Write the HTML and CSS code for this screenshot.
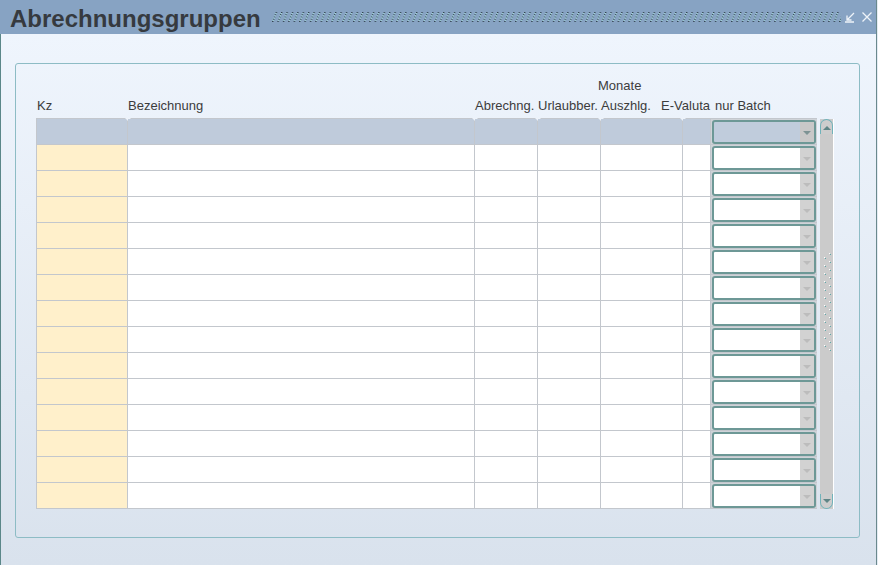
FILE: index.html
```html
<!DOCTYPE html>
<html lang="de">
<head>
<meta charset="utf-8">
<title>Abrechnungsgruppen</title>
<link rel="stylesheet" href="styles.css">
</head>
<body>
<div class="window">
  <div class="titlebar">
    <h1 class="title">Abrechnungsgruppen</h1>
    <svg class="hatch" height="10" preserveAspectRatio="none">
      <defs>
        <pattern id="hp" patternUnits="userSpaceOnUse" width="5.4" height="10">
          <line x1="0.5" y1="10" x2="4.5" y2="0" stroke="#1e2a34" stroke-width="1.2" stroke-dasharray="1.2 1.2"/>
          <line x1="0.5" y1="10" x2="4.5" y2="0" stroke="#a6dcdc" stroke-width="1.2" stroke-dasharray="1.2 1.2" stroke-dashoffset="1.2"/>
        </pattern>
      </defs>
      <rect width="100%" height="10" fill="url(#hp)"/>
    </svg>
    <div class="ctrls">
      <svg class="ico" width="10" height="11" viewBox="0 0 10 11">
        <path d="M9 1 L2.5 7.5 M2 3.5 V8 H6.5 M0 10 H9" fill="none" stroke="#eef3f9" stroke-width="1.3"/>
      </svg>
      <svg class="ico close" width="10" height="10" viewBox="0 0 10 10">
        <path d="M0.5 0.5 L9.5 9.5 M9.5 0.5 L0.5 9.5" fill="none" stroke="#eef3f9" stroke-width="1.3"/>
      </svg>
    </div>
  </div>
  <div class="body">
    <div class="panel">
      <div class="heads">
        <div class="h monate">Monate</div>
        <div class="h c1">Kz</div>
        <div class="h c2">Bezeichnung</div>
        <div class="h c3">Abrechng.</div>
        <div class="h c4">Urlaubber.</div>
        <div class="h c5">Auszhlg.</div>
        <div class="h c6 right">E-Valuta</div>
        <div class="h c7 batch">nur Batch</div>
      </div>
      <div class="area">
        <div class="grid">
          <div class="hc n"></div><div class="hc n"></div><div class="hc n"></div><div class="hc n"></div><div class="hc n"></div><div class="hc"></div><div class="cc"><div class="combo top"><span class="btn"><i></i></span></div></div>

          <div class="kz"></div><div class="w"></div><div class="w"></div><div class="w"></div><div class="w"></div><div class="w"></div><div class="cc"><div class="combo"><span class="btn"><i></i></span></div></div>
          <div class="kz"></div><div class="w"></div><div class="w"></div><div class="w"></div><div class="w"></div><div class="w"></div><div class="cc"><div class="combo"><span class="btn"><i></i></span></div></div>
          <div class="kz"></div><div class="w"></div><div class="w"></div><div class="w"></div><div class="w"></div><div class="w"></div><div class="cc"><div class="combo"><span class="btn"><i></i></span></div></div>
          <div class="kz"></div><div class="w"></div><div class="w"></div><div class="w"></div><div class="w"></div><div class="w"></div><div class="cc"><div class="combo"><span class="btn"><i></i></span></div></div>
          <div class="kz"></div><div class="w"></div><div class="w"></div><div class="w"></div><div class="w"></div><div class="w"></div><div class="cc"><div class="combo"><span class="btn"><i></i></span></div></div>
          <div class="kz"></div><div class="w"></div><div class="w"></div><div class="w"></div><div class="w"></div><div class="w"></div><div class="cc"><div class="combo"><span class="btn"><i></i></span></div></div>
          <div class="kz"></div><div class="w"></div><div class="w"></div><div class="w"></div><div class="w"></div><div class="w"></div><div class="cc"><div class="combo"><span class="btn"><i></i></span></div></div>
          <div class="kz"></div><div class="w"></div><div class="w"></div><div class="w"></div><div class="w"></div><div class="w"></div><div class="cc"><div class="combo"><span class="btn"><i></i></span></div></div>
          <div class="kz"></div><div class="w"></div><div class="w"></div><div class="w"></div><div class="w"></div><div class="w"></div><div class="cc"><div class="combo"><span class="btn"><i></i></span></div></div>
          <div class="kz"></div><div class="w"></div><div class="w"></div><div class="w"></div><div class="w"></div><div class="w"></div><div class="cc"><div class="combo"><span class="btn"><i></i></span></div></div>
          <div class="kz"></div><div class="w"></div><div class="w"></div><div class="w"></div><div class="w"></div><div class="w"></div><div class="cc"><div class="combo"><span class="btn"><i></i></span></div></div>
          <div class="kz"></div><div class="w"></div><div class="w"></div><div class="w"></div><div class="w"></div><div class="w"></div><div class="cc"><div class="combo"><span class="btn"><i></i></span></div></div>
          <div class="kz"></div><div class="w"></div><div class="w"></div><div class="w"></div><div class="w"></div><div class="w"></div><div class="cc"><div class="combo"><span class="btn"><i></i></span></div></div>
          <div class="kz"></div><div class="w"></div><div class="w"></div><div class="w"></div><div class="w"></div><div class="w"></div><div class="cc"><div class="combo"><span class="btn"><i></i></span></div></div>
        </div>
        <div class="scroll">
          <div class="sbtn up"><i></i></div>
          <div class="track">
            <svg class="grip" width="13" height="100" viewBox="0 0 13 100">
              <defs>
                <pattern id="gp" patternUnits="userSpaceOnUse" width="13" height="8">
                  <rect x="9" y="0" width="1" height="1" fill="#ffffff"/>
                  <rect x="10" y="1" width="1" height="1" fill="#5fa7a9"/>
                  <rect x="4" y="4" width="1" height="1" fill="#ffffff"/>
                  <rect x="5" y="5" width="1" height="1" fill="#5fa7a9"/>
                </pattern>
              </defs>
              <rect width="13" height="100" fill="url(#gp)"/>
            </svg>
          </div>
          <div class="sbtn down"><i></i></div>
        </div>
      </div>
    </div>
  </div>
</div>
</body>
</html>
```
FILE: styles.css
```css
html, body {
  margin: 0;
  padding: 0;
}
body {
  width: 878px;
  height: 565px;
  overflow: hidden;
  background: #e4ebf4;
  font-family: "Liberation Sans", Arial, sans-serif;
}
.window {
  width: 877px;
  height: 565px;
  box-sizing: border-box;
  border-right: 1px solid #6a898d;
  display: flex;
  flex-direction: column;
}
.titlebar {
  height: 34px;
  flex: none;
  background: #87a3c3;
  display: flex;
  align-items: center;
  padding-left: 10px;
  padding-right: 4px;
}
.title {
  margin: 0;
  padding-top: 3px;
  font-size: 24px;
  line-height: 31px;
  font-weight: bold;
  color: #363a3f;
  white-space: nowrap;
  align-self: flex-start;
}
.hatch {
  flex: 1;
  margin-left: 11px;
  margin-right: 4px;
  height: 10px;
}
.ctrls {
  display: flex;
  align-items: center;
  gap: 7px;
}
.ico {
  display: block;
}
.body {
  flex: 1;
  border-left: 1px solid #5b8789;
  background: linear-gradient(#eff5fd, #d9e2ed);
  padding-top: 29px;
  padding-left: 14px;
}
.panel {
  width: 845px;
  height: 475px;
  box-sizing: border-box;
  border: 1px solid #8dbcc5;
  border-radius: 3px;
  padding-left: 20px;
}
.heads {
  display: grid;
  grid-template-columns: 90px 346px 62px 62px 81px 27px 106px;
  grid-template-rows: 20px 20px;
  column-gap: 1px;
  padding: 12px 0 2px 1px;
  font-size: 13px;
  line-height: 20px;
  color: #3c3c3c;
}
.h {
  grid-row: 2;
  white-space: nowrap;
}
.monate {
  grid-row: 1;
  grid-column: 5;
  margin-left: -3px;
}
.c1 { grid-column: 1; }
.c2 { grid-column: 2; }
.c3 { grid-column: 3; }
.c4 { grid-column: 4; }
.c5 { grid-column: 5; }
.c6 { grid-column: 6; }
.c7 { grid-column: 7; }
.right {
  justify-self: end;
}
.batch {
  padding-left: 4px;
}
.area {
  display: flex;
  align-items: flex-start;
}
.grid {
  display: grid;
  grid-template-columns: 90px 346px 62px 62px 81px 27px 106px;
  grid-auto-rows: 25px;
  gap: 1px;
  padding: 1px 0 1px 1px;
  background: #c3c7cd;
}
.hc {
  background: #bfcbdb;
  position: relative;
}
.hc.n::after {
  content: "";
  position: absolute;
  right: -4px;
  top: -1px;
  border-top: 3px solid #eef3fa;
  border-left: 3px solid transparent;
  border-right: 3px solid transparent;
}
.kz {
  background: #fff0cb;
}
.w {
  background: #ffffff;
}
.cc {
  background: #cfd3d8;
}
.combo {
  margin: 1px 1px 0 1px;
  height: 24px;
  box-sizing: border-box;
  border: 2px solid #6d9896;
  border-radius: 3px;
  background: #ffffff;
  display: flex;
  justify-content: flex-end;
}
.combo.top {
  background: #c0ccdc;
}
.btn {
  width: 14px;
  background: #d2d2d2;
  display: flex;
  align-items: center;
  justify-content: center;
}
.btn i {
  display: block;
  width: 0;
  height: 0;
  border-top: 4px solid #bcbcbc;
  border-left: 4px solid transparent;
  border-right: 4px solid transparent;
  margin-top: 1px;
}
.combo.top .btn {
  background: #c8c8c8;
}
.combo.top .btn i {
  border-top-color: #7d9394;
}
.scroll {
  margin-left: 3px;
  margin-top: 1px;
  width: 14px;
  height: 390px;
  box-sizing: border-box;
  display: flex;
  flex-direction: column;
  background: #cbcbcb;
  border-right: 1px solid #ffffff;
}
.sbtn {
  height: 15px;
  flex: none;
  box-sizing: border-box;
  border: 1px solid #71b3ba;
  background: #cdcdcd;
  display: flex;
  align-items: center;
  justify-content: center;
}
.sbtn.up {
  border-radius: 7px 7px 0 0;
  border-bottom: none;
}
.sbtn.down {
  border-radius: 0 0 7px 7px;
  border-top: none;
}
.sbtn i {
  display: block;
  width: 0;
  height: 0;
  border-left: 4px solid transparent;
  border-right: 4px solid transparent;
}
.sbtn.up i {
  border-bottom: 4px solid #5f8586;
  margin-top: 1px;
}
.sbtn.down i {
  border-top: 4px solid #5f8586;
  margin-bottom: 1px;
}
.track {
  flex: 1;
}
.grip {
  display: block;
  margin-top: 119px;
}
```
